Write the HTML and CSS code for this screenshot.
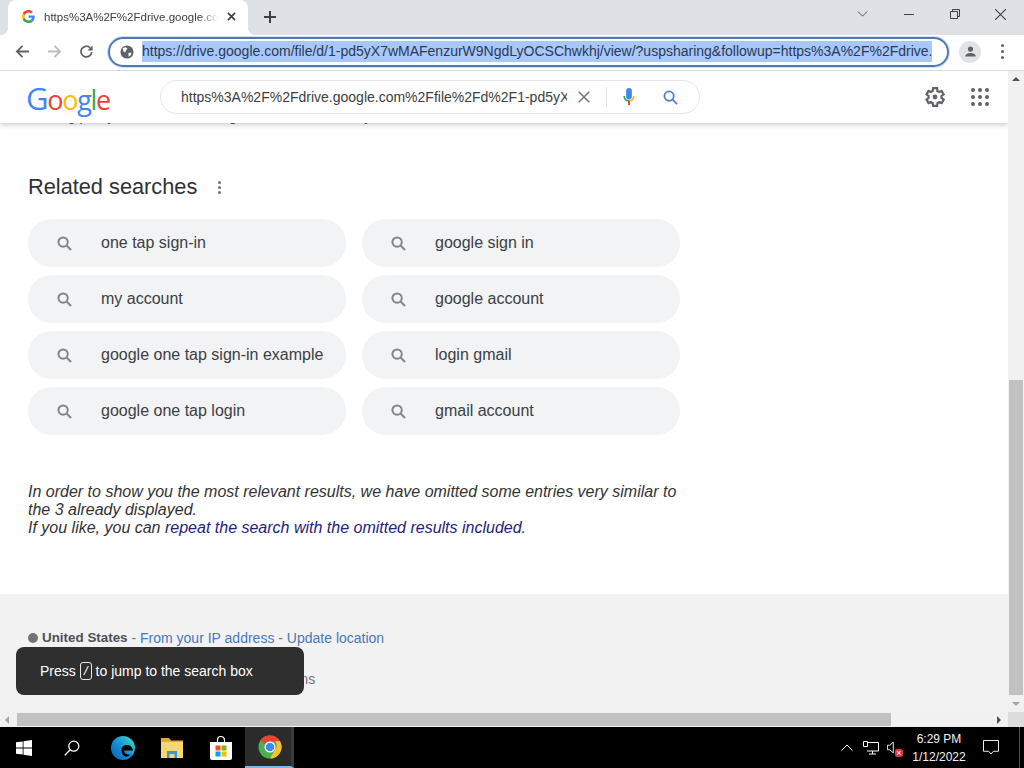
FILE: index.html
```html
<!DOCTYPE html>
<html lang="en">
<head>
<meta charset="utf-8">
<title>Google Search</title>
<link rel="stylesheet" href="styles.css">
</head>
<body>
<div class="window">
  <div class="tabstrip">
    <div class="tab">
      <svg class="favicon" viewBox="0 0 48 48"><path fill="#EA4335" d="M24 9.500c3.500 0 6.700 1.200 9.200 3.600l6.900-6.900C35.900 2.400 30.500 0 24 0 14.600 0 6.500 5.400 2.600 13.200l8 6.200C12.500 13.700 17.800 9.500 24 9.500z"/><path fill="#4285F4" d="M47 24.500c0-1.600-.1-3.100-.4-4.500H24v9h12.900c-.6 3-2.200 5.500-4.700 7.200l7.700 6C44.400 38.100 47 31.900 47 24.500z"/><path fill="#FBBC05" d="M10.500 28.600c-.5-1.400-.8-3-.8-4.600s.3-3.200.8-4.600l-8-6.200C.9 16.500 0 20.100 0 24s.9 7.500 2.600 10.800l7.900-6.200z"/><path fill="#34A853" d="M24 48c6.500 0 11.900-2.100 15.900-5.800l-7.700-6c-2.100 1.400-4.900 2.300-8.200 2.300-6.200 0-11.500-4.200-13.400-9.900l-8 6.200C6.500 42.600 14.600 48 24 48z"/></svg>
      <span class="tab-title">https%3A%2F%2Fdrive.google.com</span>
      <svg class="tab-close" viewBox="0 0 10 10"><path d="M1 1l8 8M9 1l-8 8"/></svg>
    </div>
    <svg class="newtab" viewBox="0 0 12 12"><path d="M6 0v12M0 6h12"/></svg>
    <div class="caption">
      <svg class="cap-chevron" viewBox="0 0 12 7"><path d="M.5.500L6 6 11.500.5"/></svg>
      <svg class="cap-min" viewBox="0 0 10 1"><path d="M0 .5h10"/></svg>
      <svg class="cap-max" viewBox="0 0 10 10"><path d="M.5 2.500h7v7h-7zM2.500 2.500v-2h7v7h-2"/></svg>
      <svg class="cap-close" viewBox="0 0 10 10"><path d="M0 0l10 10M10 0L0 10"/></svg>
    </div>
  </div>

  <div class="toolbar">
    <svg class="nav-icon" viewBox="0 0 16 16"><path d="M15 8H2M8 2L2 8l6 6"/></svg>
    <svg class="nav-icon nav-off" viewBox="0 0 16 16"><path d="M1 8h13M8 2l6 6-6 6"/></svg>
    <svg class="nav-icon" viewBox="0 0 16 16"><path d="M13.500 8.500A5.700 5.700 0 1 1 11.800 4"/><path class="fill" d="M14.500 1.500v5.500H9z"/></svg>
    <div class="omnibox">
      <svg class="globe" viewBox="0 0 16 16"><circle cx="8" cy="8" r="7.500" fill="#5f6368"/><path fill="#fff" d="M3 3.500l3.500-1 2 1.500-1.500 2-1 2.500-2-1zM9.500 9l3.500-.5-.5 3-2.500 2z"/></svg>
      <span class="url">https://drive.google.com/file/d/1-pd5yX7wMAFenzurW9NgdLyOCSChwkhj/view/?uspsharing&amp;followup=https%3A%2F%2Fdrive.</span>
    </div>
    <div class="avatar">
      <svg viewBox="0 0 16 16"><circle cx="8" cy="5" r="3.200"/><path d="M1.500 14c0-3 4-4.300 6.500-4.300s6.500 1.300 6.500 4.300z"/></svg>
    </div>
    <div class="kebab"><i></i><i></i><i></i></div>
  </div>

  <div class="viewport">
    <div class="view-main">
      <div class="page">
        <header class="g-header">
          <div class="logo"><span class="b cap">G</span><span class="r">o</span><span class="y">o</span><span class="b">g</span><span class="g">l</span><span class="r">e</span></div>
          <div class="searchbox">
            <span class="query">https%3A%2F%2Fdrive.google.com%2Ffile%2Fd%2F1-pd5yX7wMAFenzurW9</span>
            <svg class="sb-clear" viewBox="0 0 12 12"><path d="M.7.7l10.600 10.600M11.300.7L.7 11.300"/></svg>
            <span class="sb-div"></span>
            <svg class="sb-mic" viewBox="0 0 12 20"><rect x="3" y="0" width="6" height="12" rx="3" fill="#4285f4"/><path d="M1 8.500c0 3 2 5 5 5" fill="none" stroke="#34a853" stroke-width="1.800"/><path d="M11 8.500c0 3-2 5-5 5" fill="none" stroke="#fbbc05" stroke-width="1.800"/><rect x="5" y="13.500" width="2" height="4.500" fill="#ea4335"/></svg>
            <svg class="sb-search" viewBox="0 0 16 16"><circle cx="6.500" cy="6.500" r="5"/><path d="M10.200 10.200L15 15"/></svg>
          </div>
          <svg class="gear" viewBox="0 0 24 24"><path d="M19.400 13a7.500 7.500 0 0 0 0-2l2.100-1.600-2-3.500-2.500 1a7.500 7.500 0 0 0-1.700-1L15 3.200h-4l-.4 2.700a7.500 7.500 0 0 0-1.700 1l-2.500-1-2 3.500L6.500 11a7.500 7.500 0 0 0 0 2l-2.100 1.600 2 3.500 2.500-1a7.500 7.500 0 0 0 1.700 1l.4 2.700h4l.4-2.700a7.500 7.500 0 0 0 1.700-1l2.500 1 2-3.500z" transform="translate(-.9 0)"/><circle class="gear-hub" cx="12" cy="12" r="2.400"/></svg>
          <div class="apps"><i></i><i></i><i></i><i></i><i></i><i></i><i></i><i></i><i></i></div>
        </header>
        <div class="results">
          <p class="cut-line">Adding pretty much the same big button, and then only</p>
          <div class="related-head">
            <h2>Related searches</h2>
            <div class="mini-kebab"><i></i><i></i><i></i></div>
          </div>
          <div class="related-grid">
            <a class="chip"><svg viewBox="0 0 16 16"><circle cx="6.500" cy="6.500" r="5"/><path d="M10.200 10.200L15 15"/></svg><span>one tap sign-in</span></a>
            <a class="chip"><svg viewBox="0 0 16 16"><circle cx="6.500" cy="6.500" r="5"/><path d="M10.200 10.200L15 15"/></svg><span>google sign in</span></a>
            <a class="chip"><svg viewBox="0 0 16 16"><circle cx="6.500" cy="6.500" r="5"/><path d="M10.200 10.200L15 15"/></svg><span>my account</span></a>
            <a class="chip"><svg viewBox="0 0 16 16"><circle cx="6.500" cy="6.500" r="5"/><path d="M10.200 10.200L15 15"/></svg><span>google account</span></a>
            <a class="chip"><svg viewBox="0 0 16 16"><circle cx="6.500" cy="6.500" r="5"/><path d="M10.200 10.200L15 15"/></svg><span>google one tap sign-in example</span></a>
            <a class="chip"><svg viewBox="0 0 16 16"><circle cx="6.500" cy="6.500" r="5"/><path d="M10.200 10.200L15 15"/></svg><span>login gmail</span></a>
            <a class="chip"><svg viewBox="0 0 16 16"><circle cx="6.500" cy="6.500" r="5"/><path d="M10.200 10.200L15 15"/></svg><span>google one tap login</span></a>
            <a class="chip"><svg viewBox="0 0 16 16"><circle cx="6.500" cy="6.500" r="5"/><path d="M10.200 10.200L15 15"/></svg><span>gmail account</span></a>
          </div>
          <p class="omitted">In order to show you the most relevant results, we have omitted some entries very similar to the 3 already displayed.<br>If you like, you can <a>repeat the search with the omitted results included</a>.</p>
        </div>
        <footer class="g-footer">
          <div class="loc"><span class="dot"></span><b>United States</b><span class="sep"> - </span><a>From your IP address</a><span class="sep"> - </span><a>Update location</a></div>
          <div class="foot-links"><a>Help</a><a>Send feedback</a><a>Privacy</a><a>Terms</a></div>
        </footer>
        <div class="toast">Press <kbd>/</kbd> to jump to the search box</div>
      </div>
      <div class="vscroll">
        <span class="arr arr-up"></span>
        <div class="vtrack"><div class="vthumb"></div></div>
        <span class="arr arr-down"></span>
      </div>
    </div>
    <div class="hscroll">
      <span class="arr arr-left"></span>
      <div class="htrack"><div class="hthumb"></div></div>
      <span class="arr arr-right"></span>
      <span class="corner"></span>
    </div>
  </div>

  <div class="taskbar">
    <div class="tb-item">
      <svg class="win" viewBox="0 0 16 16"><path fill="#fff" d="M0 2.300l6.700-.9v6.200H0zM7.500 1.300L16 0v7.600H7.500zM0 8.400h6.700v6.200L0 13.700zM7.500 8.400H16V16l-8.500-1.200z"/></svg>
    </div>
    <div class="tb-item">
      <svg class="tb-search" viewBox="0 0 16 16"><circle cx="9.800" cy="6.200" r="5"/><path d="M6.200 9.800L.8 15.200"/></svg>
    </div>
    <div class="tb-item">
      <svg class="tb-app" viewBox="0 0 24 24"><defs><linearGradient id="eg" x1="0" y1="1" x2="1" y2="0"><stop offset="0" stop-color="#0b5cb0"/><stop offset=".5" stop-color="#1692dc"/><stop offset=".8" stop-color="#2fc4c8"/><stop offset="1" stop-color="#6fdc7c"/></linearGradient></defs><circle cx="12" cy="12" r="12" fill="url(#eg)"/><path fill="#000" d="M10.500 15c-.5-3.500 2-6 5-6 3.500 0 6 2 6.500 5.500h-8c-.6 0-1 .5-.8 1.200.6 2 3 3.300 6.300 3-1.300 1.200-3 2-4.500 2-2.500-.5-4.200-3-4.500-5.700z"/></svg>
    </div>
    <div class="tb-item">
      <svg class="tb-app" viewBox="0 0 24 24"><path fill="#e0ad2d" d="M1 2h8l2 2.500h12V8H1z"/><path fill="#f7d774" d="M1 6h22v16H1z"/><path fill="#3a96dd" d="M7 15h10v7h-2.500v-4h-5v4H7z"/></svg>
    </div>
    <div class="tb-item">
      <svg class="tb-app" viewBox="0 0 24 24"><path fill="none" stroke="#fff" stroke-width="1.200" d="M8.500 6V4a3.500 3.500 0 0 1 7 0v2"/><path fill="#fff" d="M1 6h22v16a2 2 0 0 1-2 2H3a2 2 0 0 1-2-2z"/><path fill="#f25022" d="M6.500 9.500h5v5h-5z"/><path fill="#7fba00" d="M12.500 9.500h5v5h-5z"/><path fill="#00a4ef" d="M6.500 15.500h5v5h-5z"/><path fill="#ffb900" d="M12.500 15.500h5v5h-5z"/></svg>
    </div>
    <div class="tb-item tb-active">
      <svg class="tb-app" viewBox="0 0 48 48"><circle cx="24" cy="24" r="23" fill="#4caf50"/><path fill="#ea4335" d="M24 1a23 23 0 0 1 20 11.500H24a11.500 11.500 0 0 0-10.500 7L5.500 9.500A23 23 0 0 1 24 1z"/><path fill="#fbc02d" d="M44 12.500A23 23 0 0 1 24 47l10-17.500a11.500 11.500 0 0 0 0-17z"/><circle cx="24" cy="24" r="11" fill="#fff"/><circle cx="24" cy="24" r="8.500" fill="#4285f4"/></svg>
    </div>
    <div class="tray">
      <svg class="tray-up" viewBox="0 0 12 7"><path d="M.5 6.500L6 1l5.500 5.500"/></svg>
      <svg class="tray-net" viewBox="0 0 16 14"><path d="M4 1.500h11.500v8.500H4M9.500 10v3M6 13h7"/><path d="M.5.500h4v5h-4z" class="tray-bg"/></svg>
      <span class="tray-sound">
        <svg viewBox="0 0 10 14"><path d="M.5 4.500h2.500L7 1v12L3 9.500H.5z"/></svg>
        <span class="mute">×</span>
      </span>
      <div class="clock"><span>6:29 PM</span><span>1/12/2022</span></div>
      <svg class="tray-note" viewBox="0 0 17 16"><path d="M.5.500h16v11.500h-5.500l-2.500 3-2.500-3H.5z"/></svg>
    </div>
    <span class="peek"></span>
  </div>
</div>
</body>
</html>
```
FILE: styles.css
```css
* { box-sizing: border-box; }
html, body { margin: 0; height: 100%; overflow: hidden; }
body { font-family: "Liberation Sans", Arial, sans-serif; color: #202124; }
a { color: inherit; text-decoration: none; }
svg { display: block; flex: none; }

.window { width: 1024px; height: 768px; display: flex; flex-direction: column; background: #fff; }

/* tab strip */
.tabstrip { height: 35px; background: #dee1e6; display: flex; align-items: flex-start; padding-left: 8px; flex: none; }
.tab { width: 240px; height: 35px; background: #fff; border-radius: 8px 8px 0 0; display: flex; align-items: center; padding: 0 7px 2px 14px; position: relative; }
.tab::before, .tab::after { content: ""; position: absolute; bottom: 0; width: 8px; height: 8px; }
.tab::before { left: -8px; background: radial-gradient(circle at 0 0, transparent 8px, #fff 8.5px); }
.tab::after { right: -8px; background: radial-gradient(circle at 100% 0, transparent 8px, #fff 8.5px); }
.favicon { width: 13px; height: 13px; }
.tab-title { font-size: 11.500px; color: #3c4043; margin-left: 9px; width: 174px; overflow: hidden; white-space: nowrap; -webkit-mask-image: linear-gradient(90deg, #000 90%, transparent); mask-image: linear-gradient(90deg, #000 90%, transparent); }
.tab-close { width: 9px; height: 9px; margin-left: 9px; fill: none; stroke: #3c4043; stroke-width: 1.800; }
.newtab { width: 12px; height: 12px; margin: 11px 0 0 16px; fill: none; stroke: #3c4043; stroke-width: 2; }
.caption { margin-left: auto; height: 28px; display: flex; align-items: center; }
.caption svg { fill: none; stroke: #3c4043; stroke-width: 1; }
.cap-chevron { width: 11px; height: 6px; margin-right: 36px; }
.cap-min { width: 10px; height: 1px; margin-right: 36px; }
.cap-max { width: 10px; height: 10px; margin-right: 35px; }
.cap-close { width: 11px; height: 11px; margin-right: 18px; }

/* toolbar */
.toolbar { height: 36px; flex: none; display: flex; align-items: center; padding: 0 16px 2px 15px; border-bottom: 1px solid #dadce0; background: #fff; }
.nav-icon { width: 15px; height: 15px; fill: none; stroke: #5f6368; stroke-width: 1.900; margin-right: 17px; }
.nav-icon .fill { fill: #5f6368; stroke: none; }
.nav-off { stroke: #babcbe; }
.omnibox { width: 841px; height: 30px; margin-left: -3px; border: 2px solid #4f78b4; border-radius: 15px; display: flex; align-items: center; padding-left: 10px; overflow: hidden; box-shadow: 0 0 0 1px #cfe0f8; flex: none; }
.globe { width: 14px; height: 14px; margin-right: 8px; }
.url { font-size: 14px; line-height: 21px; height: 21px; background: #a8c7fa; color: #2a3a55; white-space: nowrap; }
.avatar { width: 22px; height: 22px; border-radius: 50%; background: #e1e3e6; margin-left: 10px; display: flex; align-items: center; justify-content: center; }
.avatar svg { width: 13px; height: 13px; fill: #5f6368; }
.kebab { margin-left: 20px; display: flex; flex-direction: column; gap: 3px; }
.kebab i { width: 3px; height: 3px; border-radius: 50%; background: #5f6368; display: block; }

/* viewport */
.viewport { height: 656px; flex: none; display: flex; flex-direction: column; }
.view-main { flex: 1; min-height: 0; display: flex; }
.page { flex: 1; min-width: 0; position: relative; overflow: hidden; display: flex; flex-direction: column; background: #fff; }

.g-header { height: 52px; flex: none; display: flex; align-items: center; background: #fff; box-shadow: 0 1px 6px rgba(32,33,36,.28); position: relative; z-index: 2; }
.logo { width: 85px; margin: 0 0 0 26px; font-family: "Open Sans", "Liberation Sans", sans-serif; font-weight: 500; font-size: 27px; letter-spacing: -1.300px; line-height: 54px; height: 52px; white-space: nowrap; }
.logo .cap { font-size: 31px; }
.logo .b { color: #4285f4; } .logo .r { color: #ea4335; } .logo .y { color: #fbbc05; } .logo .g { color: #34a853; }
.searchbox { width: 540px; height: 34px; margin-left: 49px; border: 1px solid #e4e6e8; border-radius: 17px; display: flex; align-items: center; padding-left: 20px; background: #fff; }
.query { font-size: 14px; color: #3c4043; width: 386px; overflow: hidden; white-space: nowrap; }
.sb-clear { width: 12px; height: 12px; margin-left: 11px; fill: none; stroke: #70757a; stroke-width: 1.500; }
.sb-div { width: 1px; height: 20px; background: #dfe1e5; margin-left: 16px; }
.sb-mic { width: 12px; height: 19px; margin-left: 16px; }
.sb-search { width: 15px; height: 15px; margin-left: 28px; fill: none; stroke: #4b7fd0; stroke-width: 1.900; }
.gear { width: 24px; height: 24px; margin-left: 223px; fill: none; stroke: #5f6368; stroke-width: 2.200; }
.gear-hub { fill: #5f6368; stroke: none; }
.apps { display: grid; grid-template-columns: repeat(3, 4px); gap: 3px; margin-left: 24px; }
.apps i { width: 4px; height: 4px; border-radius: 50%; background: #5f6368; display: block; }

.results { flex: 1; min-height: 0; padding-left: 28px; width: 680px; }
.cut-line { margin: -17px 0 0; height: 20px; line-height: 20px; font-size: 14px; color: #4d5156; white-space: nowrap; padding-left: 4px; }
.related-head { display: flex; align-items: center; margin-top: 47px; height: 28px; }
.related-head h2 { margin: 0; font-size: 21.750px; font-weight: 400; color: #303134; line-height: 28px; }
.mini-kebab { margin-left: 21px; display: flex; flex-direction: column; gap: 2px; }
.mini-kebab i { width: 3px; height: 3px; border-radius: 50%; background: #70757a; display: block; }
.related-grid { display: grid; grid-template-columns: 318px 318px; column-gap: 16px; row-gap: 8px; margin-top: 18px; }
.chip { height: 48px; background: #f1f3f4; border-radius: 24px; display: flex; align-items: center; padding-left: 29px; font-size: 16px; color: #3c4043; white-space: nowrap; }
.chip svg { width: 15px; height: 15px; fill: none; stroke: #80868b; stroke-width: 2.100; margin-right: 29px; }
.omitted { margin: 48px 0 0; font-style: italic; font-size: 16px; line-height: 18px; color: #333; }
.omitted a { color: #281d7a; }

.g-footer { height: 118px; flex: none; background: #f2f2f2; padding: 36px 0 0 28px; font-size: 14px; color: #70757a; }
.loc { line-height: 16px; display: flex; align-items: center; white-space: pre; }
.dot { width: 10px; height: 10px; border-radius: 50%; background: #70757a; margin-right: 4px; }
.loc b { color: #4d5156; font-size: 13.400px; }
.loc a { color: #4a78b8; }
.foot-links { margin-top: 25px; line-height: 16px; white-space: nowrap; display: flex; gap: 27px; }

.toast { position: absolute; left: 16px; top: 576px; width: 288px; height: 48px; background: #2f2f2f; border-radius: 8px; color: #fff; font-size: 14px; display: flex; align-items: center; padding-left: 24px; white-space: pre; z-index: 3; }
.toast kbd { font-family: inherit; font-size: 13px; border: 1px solid #e8eaed; border-radius: 3px; width: 12px; height: 18px; line-height: 16px; display: block; text-align: center; font-style: italic; }

/* scrollbars */
.vscroll { width: 16px; flex: none; background: #f1f1f1; display: flex; flex-direction: column; align-items: center; }
.vtrack { flex: 1; width: 100%; display: flex; flex-direction: column; justify-content: flex-end; padding: 0 1px 2px; }
.vthumb { height: 315px; background: #c1c1c1; }
.hscroll { height: 15px; flex: none; background: #f1f1f1; display: flex; align-items: center; }
.htrack { width: 971px; height: 100%; padding: 1px 0; }
.hthumb { width: 874px; height: 13px; background: #c1c1c1; }
.corner { width: 16px; height: 15px; background: #dcdcdc; }
.arr { width: 0; height: 0; flex: none; display: block; border: 4px solid transparent; }
.arr-up { border-top: 0; border-bottom-color: #505050; margin: 6px 0 5px; }
.arr-down { border-bottom: 0; border-top-color: #a3a3a3; margin: 5px 0 6px; }
.arr-left { border-left: 0; border-right-color: #a3a3a3; margin: 0 8px 0 5px; }
.arr-right { border-right: 0; border-left-color: #505050; margin: 0 7px 0 9px; }

/* taskbar */
.taskbar { flex: 1; background: #000; display: flex; align-items: stretch; min-height: 0; }
.tb-item { width: 49px; display: flex; align-items: center; justify-content: center; }
.win { width: 16px; height: 16px; margin-right: 2px; }
.tb-search { width: 16px; height: 16px; fill: none; stroke: #fff; stroke-width: 1.300; margin-right: 4px; }
.tb-app { width: 24px; height: 24px; }
.tb-active { background: #2b2b2b; border-bottom: 2px solid #76b9ed; border-right: 3px solid #3a3a3a; padding-left: 3px; }
.tray { margin-left: auto; display: flex; align-items: center; color: #fff; padding-right: 20px; }
.tray-up { width: 12px; height: 7px; fill: none; stroke: #fff; margin-right: 10px; }
.tray-net { width: 16px; height: 14px; fill: none; stroke: #fff; margin-right: 8px; }
.tray-net .tray-bg { fill: #000; }
.tray-sound { width: 16px; height: 18px; display: flex; align-items: center; position: relative; margin-right: 10px; }
.tray-sound svg { width: 9px; height: 13px; fill: none; stroke: #fff; }
.mute { position: absolute; left: 8px; bottom: 0; width: 8px; height: 8px; border-radius: 2px; background: #d9383f; font-size: 9px; line-height: 8px; text-align: center; color: #fff; }
.clock { display: flex; flex-direction: column; align-items: center; font-size: 12px; line-height: 18px; width: 52px; color: #f2f2f2; }
.tray-note { width: 16px; height: 15px; margin-left: 18px; fill: none; stroke: #fff; }
.peek { width: 5px; flex: none; border-left: 1px solid #4a4a4a; }
```
